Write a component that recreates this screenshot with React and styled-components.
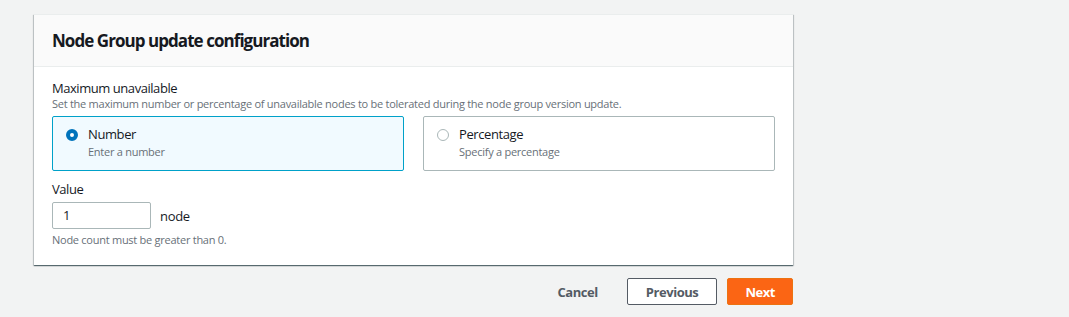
import styled, { createGlobalStyle } from 'styled-components'

const Global = createGlobalStyle`
  body {
    margin: 0;
    background: #f2f3f3;
    font-family: "Open Sans", "Liberation Sans", sans-serif;
    color: #16191f;
  }
`

const Page = styled.div`
  width: 759px;
  padding: 14px 0 0 34px;
`

const Card = styled.section`
  background: #fff;
  box-shadow: 0 1px 1px 0 rgba(0, 28, 36, 0.5), 1px 1px 1px 0 rgba(0, 28, 36, 0.15), -1px 1px 1px 0 rgba(0, 28, 36, 0.15);
  border-top: 1px solid #eaeded;
`

const CardHeader = styled.div`
  background: #fafafa;
  border-bottom: 1px solid #eaeded;
  padding: 15px 18px 14px;
`

const Title = styled.h2`
  margin: 0;
  font-size: 17px;
  font-weight: 700;
  line-height: 22px;
  letter-spacing: -0.95px;
`

const CardBody = styled.div`
  padding: 12px 18px 18px;
`

const Label = styled.div`
  font-size: 13px;
  line-height: 18px;
  letter-spacing: -0.45px;
`

const Description = styled.div`
  font-size: 11px;
  line-height: 14px;
  letter-spacing: -0.26px;
  color: #687078;
`

const Tiles = styled.div`
  display: grid;
  grid-template-columns: 1fr 1fr;
  gap: 19px;
  margin-top: 5px;
`

const Tile = styled.label`
  display: flex;
  gap: 10px;
  height: 55px;
  box-sizing: border-box;
  padding: 7px 13px;
  border: 1px solid ${p => (p.$selected ? '#00a1c9' : '#aab7b8')};
  background: ${p => (p.$selected ? '#f1faff' : '#fff')};
  border-radius: 2px;
`

const Radio = styled.span`
  flex: none;
  width: 12px;
  height: 12px;
  margin-top: 5px;
  border-radius: 50%;
  box-sizing: border-box;
  border: ${p => (p.$checked ? '4px solid #0073bb' : '1px solid #aab7b8')};
  background: #fff;
`

const TileText = styled.div`
  display: flex;
  flex-direction: column;
`

const TileLabel = styled.span`
  font-size: 13px;
  line-height: 20px;
  letter-spacing: -0.4px;
`

const TileHint = styled.span`
  font-size: 11px;
  line-height: 15px;
  letter-spacing: -0.26px;
  color: #687078;
`

const Field = styled.div`
  margin-top: 9px;
`

const InputRow = styled.div`
  display: flex;
  align-items: center;
  gap: 9px;
  margin-top: 4px;
`

const Input = styled.div`
  width: 99px;
  height: 27px;
  box-sizing: border-box;
  border: 1px solid #aab7b8;
  border-radius: 2px;
  padding: 0 10px;
  font-size: 13px;
  line-height: 25px;
`

const Unit = styled.span`
  font-size: 13px;
  letter-spacing: -0.3px;
`

const Constraint = styled.div`
  margin-top: 4px;
  font-size: 11px;
  line-height: 14px;
  letter-spacing: -0.26px;
  color: #687078;
`

const Actions = styled.div`
  display: flex;
  justify-content: flex-end;
  align-items: center;
  gap: 10px;
  margin-top: 13px;
`

const Button = styled.button`
  height: 27px;
  box-sizing: border-box;
  padding: 0 ${p => (p.$variant === 'primary' ? '17px' : '18px')};
  border-radius: 2px;
  font-family: inherit;
  font-size: 13px;
  font-weight: 700;
  letter-spacing: -0.45px;
  border: 1px solid ${p => (p.$variant === 'primary' ? '#ec7211' : p.$variant === 'normal' ? '#545b64' : 'transparent')};
  background: ${p => (p.$variant === 'primary' ? '#fb6514' : p.$variant === 'normal' ? '#fff' : 'transparent')};
  color: ${p => (p.$variant === 'primary' ? '#fff' : '#545b64')};
`

export default function App() {
  return (
    <>
      <Global />
      <Page>
        <Card>
          <CardHeader>
            <Title>Node Group update configuration</Title>
          </CardHeader>
          <CardBody>
            <Label>Maximum unavailable</Label>
            <Description>Set the maximum number or percentage of unavailable nodes to be tolerated during the node group version update.</Description>
            <Tiles>
              <Tile $selected>
                <Radio $checked />
                <TileText>
                  <TileLabel>Number</TileLabel>
                  <TileHint>Enter a number</TileHint>
                </TileText>
              </Tile>
              <Tile>
                <Radio />
                <TileText>
                  <TileLabel>Percentage</TileLabel>
                  <TileHint>Specify a percentage</TileHint>
                </TileText>
              </Tile>
            </Tiles>
            <Field>
              <Label>Value</Label>
              <InputRow>
                <Input>1</Input>
                <Unit>node</Unit>
              </InputRow>
              <Constraint>Node count must be greater than 0.</Constraint>
            </Field>
          </CardBody>
        </Card>
        <Actions>
          <Button>Cancel</Button>
          <Button $variant="normal">Previous</Button>
          <Button $variant="primary">Next</Button>
        </Actions>
      </Page>
    </>
  )
}
